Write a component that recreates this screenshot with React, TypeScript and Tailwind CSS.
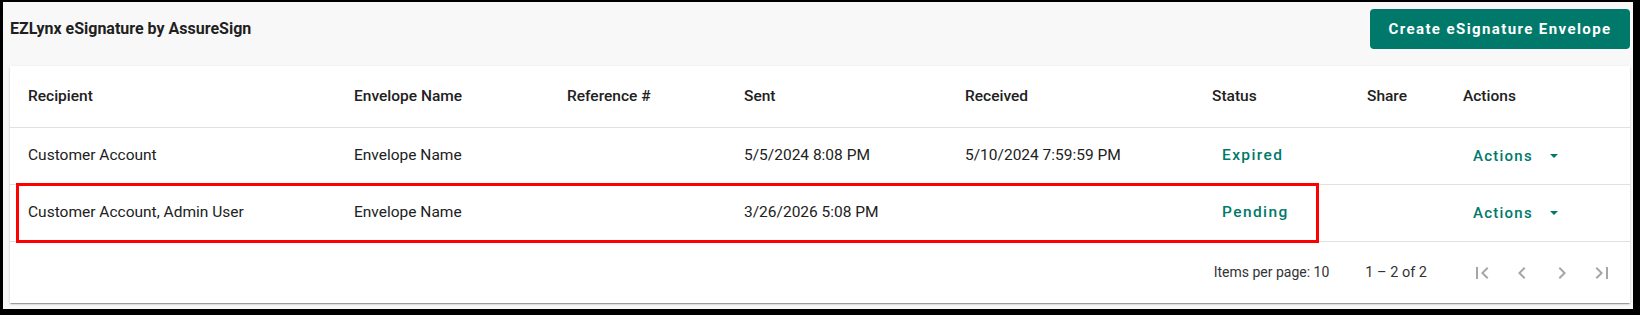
import React from 'react';

const cols = 'grid grid-cols-[344px_213px_177px_221px_247px_155px_96px_167px] items-center';

const rows = [
  { recipient: 'Customer Account', envelope: 'Envelope Name', ref: '', sent: '5/5/2024 8:08 PM', received: '5/10/2024 7:59:59 PM', status: 'Expired' },
  { recipient: 'Customer Account, Admin User', envelope: 'Envelope Name', ref: '', sent: '3/26/2026 5:08 PM', received: '', status: 'Pending', flagged: true },
];

function PagerIcon({ d }: { d: string }) {
  return (
    <button className="w-10 h-10 flex items-center justify-center">
      <svg width="24" height="24" viewBox="0 0 24 24" fill="#a6a6a6">
        <path d={d} />
      </svg>
    </button>
  );
}

export default function App() {
  return (
    <div className="w-[1640px] h-[315px] box-border border-black border-t-2 border-l-[3px] border-r-[7px] border-b-[6px] bg-[#f8f8f8] pl-[7px] pr-[3px] pt-[7px] font-['Roboto',sans-serif] text-[#212121]">
      <div className="flex items-center justify-between h-10">
        <h1 className="text-[16px] font-bold text-[#1f1f1f]">EZLynx eSignature by AssureSign</h1>
        <button className="h-10 w-[260px] rounded-[4px] bg-[#00796b] text-white text-[15px] font-bold tracking-[1.4px]">
          Create eSignature Envelope
        </button>
      </div>

      <div className="mt-[17px] bg-white shadow-[0_2px_1px_-1px_rgba(0,0,0,0.2),0_1px_1px_0_rgba(0,0,0,0.14),0_1px_3px_0_rgba(0,0,0,0.12)]">
        {/* header */}
        <div className={`${cols} h-[62px] border-b border-[#e0e0e0] text-[15.5px] font-medium`}>
          <div className="pl-[18px]">Recipient</div>
          <div>Envelope Name</div>
          <div>Reference #</div>
          <div>Sent</div>
          <div>Received</div>
          <div>Status</div>
          <div>Share</div>
          <div>Actions</div>
        </div>

        {rows.map((r, i) => (
          <div key={i} className={`${cols} relative h-[57px] border-b border-[#e0e0e0] text-[15.5px]`}>
            <div className="pl-[18px]">{r.recipient}</div>
            <div>{r.envelope}</div>
            <div>{r.ref}</div>
            <div>{r.sent}</div>
            <div>{r.received}</div>
            <div className="pl-[10px] text-[15.5px] font-medium tracking-[1.4px] text-[#00796b]">{r.status}</div>
            <div></div>
            <div className="pl-[10px] flex items-center text-[15px] font-medium tracking-[1.25px] text-[#00796b]">
              Actions
              <span className="ml-[17px] w-0 h-0 border-l-[4px] border-r-[4px] border-t-[4px] border-l-transparent border-r-transparent border-t-[#00796b]" />
            </div>
            {r.flagged && (
              <div className="absolute left-[6px] top-[-2px] w-[1303px] h-[60px] border-[3px] border-[#ff0000] pointer-events-none" />
            )}
          </div>
        ))}

        {/* paginator */}
        <div className="h-[61px] flex items-center justify-end pr-[8px] text-[#333]">
          <span className="text-[14px]">Items per page: 10</span>
          <span className="ml-[36px] mr-[35px] text-[14.5px]">1 – 2 of 2</span>
          <PagerIcon d="M18.41 16.59L13.82 12l4.59-4.59L17 6l-6 6 6 6zM6 6h2v12H6z" />
          <PagerIcon d="M15.41 7.41L14 6l-6 6 6 6 1.41-1.41L10.83 12z" />
          <PagerIcon d="M10 6L8.59 7.41 13.17 12l-4.58 4.59L10 18l6-6z" />
          <PagerIcon d="M5.59 7.41L10.18 12l-4.59 4.59L7 18l6-6-6-6zM16 6h2v12h-2z" />
        </div>
      </div>
    </div>
  );
}
